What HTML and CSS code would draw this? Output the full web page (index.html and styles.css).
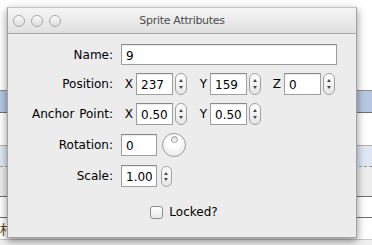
FILE: index.html
```html
<!DOCTYPE html>
<html lang="en">
<head>
    <meta charset="UTF-8">
    <title>Sprite Attributes</title>
    <link rel="stylesheet" href="styles.css">
</head>
<body>
    <!-- the app window lying behind the panel -->
    <div class="desk">
        <div class="desk-top"></div>
        <div class="desk-row selected"></div>
        <div class="desk-row plain"></div>
        <div class="desk-row hilite"></div>
        <div class="desk-row grey"></div>
        <div class="desk-row line"></div>
        <div class="desk-row line cjk">村</div>
        <div class="desk-foot"></div>
    </div>

    <div class="window">
        <div class="titlebar">
            <div class="lights">
                <span class="light"></span>
                <span class="light"></span>
                <span class="light"></span>
            </div>
            <div class="title">Sprite Attributes</div>
        </div>

        <div class="form">
            <label class="label">Name:</label>
            <div class="field">
                <input class="text wide" type="text" value="9">
            </div>

            <label class="label">Position:</label>
            <div class="field">
                <div class="axis"><span class="axis-name">X</span><input class="text num" value="237"><span class="stepper"></span></div>
                <div class="axis"><span class="axis-name">Y</span><input class="text num" value="159"><span class="stepper"></span></div>
                <div class="axis"><span class="axis-name">Z</span><input class="text num" value="0"><span class="stepper"></span></div>
            </div>

            <label class="label">Anchor Point:</label>
            <div class="field">
                <div class="axis"><span class="axis-name">X</span><input class="text num" value="0.50"><span class="stepper"></span></div>
                <div class="axis"><span class="axis-name">Y</span><input class="text num" value="0.50"><span class="stepper"></span></div>
            </div>

            <label class="label">Rotation:</label>
            <div class="field">
                <input class="text short" value="0">
                <span class="knob"></span>
            </div>

            <label class="label">Scale:</label>
            <div class="field">
                <input class="text short" value="1.00">
                <span class="stepper single"></span>
            </div>

            <div class="locked">
                <span class="checkbox"></span>
                <span>Locked?</span>
            </div>
        </div>
    </div>
</body>
</html>
```

FILE: styles.css
```css
:root {
    --panel-bg: #ececec;
    --field-border: #9e9e9e;
    --text: #000000;
}

body {
    margin: 0;
    width: 372px;
    height: 245px;
    overflow: hidden;
    position: relative;
    background: #ffffff;
    font-family: "DejaVu Sans", "Liberation Sans", sans-serif;
    font-size: 12px;
    color: var(--text);
}

/* background app */
.desk-top {
    height: 90px;
}

.desk-row {
    box-sizing: border-box;
}

.desk-row.selected {
    height: 23px;
    background: #b5c7e2;
    border-top: 1px solid #8c8c8c;
    border-bottom: 1px solid #6f6f6f;
}

.desk-row.plain {
    height: 32px;
}

.desk-row.hilite {
    height: 22px;
    background: #dee7f3;
    border-top: 1px solid #b0b0b0;
    border-bottom: 1px dashed #9a9a9a;
}

.desk-row.grey {
    height: 29px;
    background: #ededed;
}

.desk-row.line {
    height: 21px;
    border-top: 1px solid #6e6e6e;
}

.desk-row.cjk {
    height: 23px;
    font-family: "Noto Sans CJK SC", sans-serif;
    font-size: 13px;
    line-height: 22px;
    color: #5a3a10;
    border-bottom: 1px solid #c8c8c8;
}

.desk-foot {
    height: 10px;
    background: #f0f0f0;
}

/* floating panel */
.window {
    position: absolute;
    left: 7px;
    top: 7px;
    width: 350px;
    height: 231px;
    box-sizing: border-box;
    background: var(--panel-bg);
    border: 1px solid #a2a2a2;
    border-top-color: #c4c4c4;
    box-shadow: 0 3px 8px rgba(0, 0, 0, 0.45);
}

.titlebar {
    height: 26px;
    box-sizing: border-box;
    display: grid;
    grid-template-columns: 1fr auto 1fr;
    align-items: center;
    background: linear-gradient(#f5f5f5, #e0e0e0);
    border-bottom: 1px solid #a9a9a9;
}

.lights {
    display: flex;
    gap: 6px;
    padding-left: 5px;
}

.light {
    width: 10px;
    height: 10px;
    border-radius: 50%;
    border: 1px solid #a9a9a9;
    background: linear-gradient(#fafafa, #dcdcdc);
}

.title {
    font-size: 11px;
    letter-spacing: -0.3px;
    color: #4d4d4d;
}

.form {
    display: grid;
    grid-template-columns: 105px 1fr;
    column-gap: 8px;
    row-gap: 8px;
    align-items: center;
    padding-top: 10px;
}

.label {
    text-align: right;
    word-spacing: 1px;
}

.field {
    display: flex;
    align-items: center;
    gap: 8px;
}

.text {
    box-sizing: border-box;
    height: 22px;
    margin: 0;
    padding: 2px 4px 0;
    font-family: inherit;
    font-size: 12px;
    color: var(--text);
    background: #ffffff;
    border: 1px solid var(--field-border);
    border-top-color: #888888;
    border-radius: 0;
    box-shadow: inset 0 1px 1px rgba(0, 0, 0, 0.08);
    outline: none;
}

.text.wide {
    width: 216px;
    height: 21px;
}

.text.num {
    width: 37px;
}

.text.short {
    width: 36px;
}

.axis {
    display: flex;
    align-items: center;
}

.axis-name {
    width: 15px;
    padding-right: 3px;
    box-sizing: border-box;
    text-align: right;
}

.stepper {
    position: relative;
    width: 12px;
    height: 22px;
    box-sizing: border-box;
    margin-left: 2px;
    border: 1px solid #a0a0a0;
    border-radius: 6px;
    background: linear-gradient(#ffffff, #e6e6e6);
}

.stepper.single {
    margin-left: -4px;
    width: 11px;
    height: 21px;
}

.stepper:before,
.stepper:after {
    content: "";
    position: absolute;
    left: 50%;
    margin-left: -2.5px;
    border-left: 2.5px solid transparent;
    border-right: 2.5px solid transparent;
}

.stepper:before {
    top: 5px;
    border-bottom: 3px solid #4a4a4a;
}

.stepper:after {
    bottom: 5px;
    border-top: 3px solid #4a4a4a;
}

.knob {
    position: relative;
    width: 24px;
    height: 24px;
    box-sizing: border-box;
    margin-left: -3px;
    border-radius: 50%;
    border: 1px solid #9c9c9c;
    background: radial-gradient(circle at 50% 35%, #ffffff 30%, #e2e2e2 100%);
}

.knob:after {
    content: "";
    position: absolute;
    left: 50%;
    top: 2px;
    width: 5px;
    height: 5px;
    margin-left: -3.5px;
    border-radius: 50%;
    border: 1px solid #9a9a9a;
    background: linear-gradient(#d8d8d8, #ffffff);
}

.locked {
    grid-column: 1 / -1;
    justify-self: center;
    display: flex;
    align-items: center;
    gap: 6px;
    margin-top: 10px;
    margin-left: 4px;
}

.checkbox {
    width: 13px;
    height: 13px;
    box-sizing: border-box;
    border: 1px solid #8e8e8e;
    border-radius: 3px;
    background: linear-gradient(#ffffff, #e8e8e8);
}
```
